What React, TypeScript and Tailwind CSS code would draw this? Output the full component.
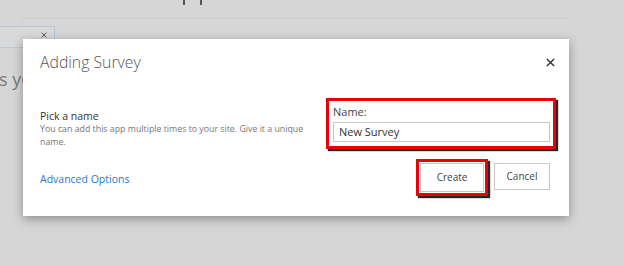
import React from 'react';

const font = { fontFamily: '"Segoe UI", "Open Sans", "Liberation Sans", sans-serif' };

function CloseIcon({ className }: { className?: string }) {
  return (
    <svg viewBox="0 0 10 10" className={className} fill="none" stroke="currentColor" strokeWidth="1.6">
      <path d="M1 1 L9 9 M9 1 L1 9" />
    </svg>
  );
}

export default function App() {
  return (
    <div className="relative w-[624px] h-[265px] overflow-hidden bg-[#d6d6d6]" style={font}>
      {/* page behind the overlay */}
      <div className="absolute left-[183px] top-0 w-[2px] h-[5px] bg-[#555]" />
      <div className="absolute left-[200px] top-0 w-[2px] h-[5px] bg-[#555]" />
      <div className="absolute left-[22px] top-[18px] w-[550px] border-t border-dotted border-[#c9c9c9]" />
      <div className="absolute -left-[2px] top-[26px] w-[57px] h-[22px] border border-[#b9c7d6] bg-[#d9d9d9]" />
      <CloseIcon className="absolute left-[41px] top-[32px] w-[6px] h-[6px] text-[#555]" />
      <div className="absolute -left-[1px] top-[70px] text-[18px] text-[#7a7a7a] leading-none">s yo</div>

      {/* dialog */}
      <div className="absolute left-[23px] top-[39px] w-[546px] h-[177px] bg-white shadow-[0_3px_10px_rgba(0,0,0,0.35)] pl-[17px] pr-[19px]">
        <div className="flex items-start justify-between pt-[12px]">
          <h1 className="text-[15.8px] font-light text-[#555] leading-[22px]">Adding Survey</h1>
          <CloseIcon className="mt-[7px] -mr-[5px] w-[9px] h-[9px] text-[#333]" />
        </div>

        <div className="flex mt-[25px]">
          <div className="w-[275px] pt-[11px]">
            <div className="text-[10.5px] text-[#333] leading-[14px]">Pick a name</div>
            <div className="text-[8.8px] text-[#777] leading-[13px] w-[275px]">
              You can add this app multiple times to your site. Give it a unique name.
            </div>
            <div className="mt-[23px] text-[10.5px] text-[#2b79c9] leading-[14px]">Advanced Options</div>
          </div>

          <div className="ml-auto flex flex-col items-end -mr-[6px]">
            <div className="w-[230px] h-[51px] border-[3px] border-[#e8000b] shadow-[2px_2px_1px_rgba(0,0,0,0.85)] pl-[4px] pr-[3px]">
              <div className="text-[11px] text-[#444] leading-[14px] mt-[4px]">Name:</div>
              <div className="mt-[3px] h-[20px] border border-[#c6c6c6] pl-[5px] text-[11px] text-[#333] leading-[18px]">
                New Survey
              </div>
            </div>

            <div className="flex items-start mt-[10px] pr-[6px]">
              <div className="w-[72px] h-[37px] border-[3px] border-[#e8000b] shadow-[2px_2px_1px_rgba(0,0,0,0.85)] p-[1px]">
                <button className="w-full h-full border border-[#c6c6c6] bg-white text-[10px] text-[#444]">Create</button>
              </div>
              <button className="ml-[6px] mt-[4px] w-[56px] h-[27px] border border-[#c6c6c6] bg-white text-[10px] text-[#444]">Cancel</button>
            </div>
          </div>
        </div>
      </div>
    </div>
  );
}
